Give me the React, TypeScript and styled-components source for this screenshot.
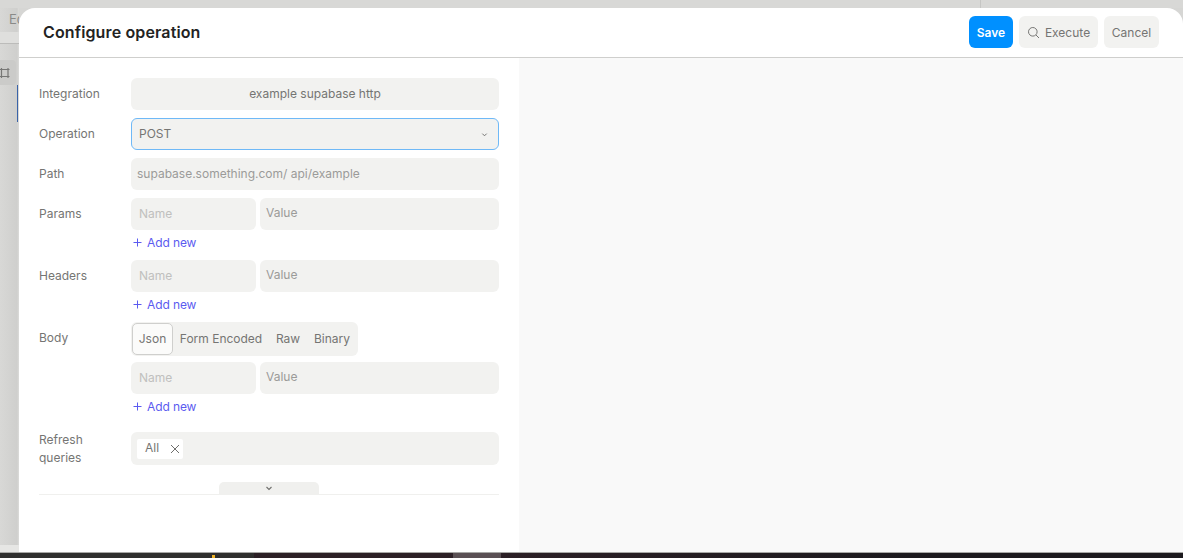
import React from "react";
import styled, { createGlobalStyle } from "styled-components";

const Global = createGlobalStyle`
  html, body { margin: 0; padding: 0; height: 100%; overflow: hidden; }
  body { font-family: Inter, "Liberation Sans", sans-serif; background: #d6d6d4; }
  #root { height: 100%; }
  * { box-sizing: border-box; }
`;

const Page = styled.div`
  width: 1183px;
  height: 558px;
  display: flex;
  flex-direction: column;
  overflow: hidden;
`;
const TopStrip = styled.div`
  height: 8px;
  flex: none;
  background: #d8d8d6;
`;
const StripPane = styled.div`
  width: 981px;
  height: 100%;
  border-right: 1px solid #c6c6c4;
`;
const Middle = styled.div`
  flex: 1;
  display: flex;
  min-height: 0;
`;
const Gutter = styled.aside`
  width: 19px;
  flex: none;
  display: flex;
  flex-direction: column;
  background: linear-gradient(to right, #d8d8d6, #cfcfcd 90%, #dcdcda);
  overflow: hidden;
`;
const GutterTitle = styled.div`
  height: 24px;
  flex: none;
  padding: 3px 0 0 9px;
  font-size: 13px;
  line-height: 16px;
  white-space: nowrap;
  color: #8a8a88;
`;
const GutterBand = styled.div`
  height: 12px;
  flex: none;
  background: #dfdfdd;
  border-bottom: 1px solid #bcbcba;
  margin-bottom: 16px;
`;
const GutterIconSlot = styled.div`
  width: 16px;
  height: 25px;
  flex: none;
  background: #cbcbc9;
  border-radius: 0 4px 4px 0;
  display: flex;
  align-items: center;
`;
const GutterLine = styled.div`
  width: 1px;
  height: 37px;
  flex: none;
  margin-left: 17px;
  background: #3a63a8;
`;
const GutterFill = styled.div`
  flex: 1;
`;
const GutterFoot = styled.div`
  height: 7px;
  flex: none;
  background: #e6e6e4;
`;
const Modal = styled.section`
  flex: 1;
  background: #fff;
  border-radius: 16px 16px 0 0;
  display: flex;
  flex-direction: column;
  min-width: 0;
`;
const Header = styled.header`
  height: 50px;
  flex: none;
  border-bottom: 1px solid #cfcfcd;
  display: flex;
  align-items: center;
  justify-content: space-between;
  padding: 0 24px;
`;
const Title = styled.h1`
  margin: 0 0 2px;
  font-size: 16px;
  letter-spacing: 0.13px;
  font-weight: 600;
  color: #232323;
`;
const Actions = styled.div`
  display: flex;
  gap: 6px;
  margin-bottom: 1px;
`;
const Button = styled.button<{ $primary?: boolean; $w: number }>`
  height: 32px;
  width: ${(p) => p.$w}px;
  border: none;
  border-radius: 6px;
  padding: 0;
  display: flex;
  align-items: center;
  justify-content: center;
  gap: 5px;
  font-family: inherit;
  font-size: 12px;
  font-weight: ${(p) => (p.$primary ? 600 : 400)};
  background: ${(p) => (p.$primary ? "#0090ff" : "#f2f2f0")};
  color: ${(p) => (p.$primary ? "#fff" : "#757573")};
`;
const Body = styled.div`
  flex: 1;
  display: flex;
  min-height: 0;
`;
const Form = styled.div`
  width: 500px;
  flex: none;
  padding: 20px 20px 0;
  display: flex;
  flex-direction: column;
`;
const Preview = styled.div`
  flex: 1;
  background: #f9f9f9;
`;
const Row = styled.div<{ $mb?: number }>`
  display: grid;
  grid-template-columns: 92px 368px;
  margin-bottom: ${(p) => p.$mb ?? 8}px;
`;
const Label = styled.label<{ $raised?: boolean }>`
  font-size: 12px;
  line-height: 18px;
  margin-top: ${(p) => (p.$raised ? -1 : 0)}px;
  padding: ${(p) => (p.$raised ? 0 : 7)}px 20px 0 0;
  color: #757573;
`;
const Field = styled.div<{ $center?: boolean; $focus?: boolean; $pad?: number }>`
  height: 32px;
  border-radius: 6px;
  background: #f2f2f0;
  display: flex;
  align-items: center;
  justify-content: ${(p) => (p.$center ? "center" : "space-between")};
  padding: 0 ${(p) => p.$pad ?? 8}px 2px;
  font-size: 12px;
  color: #757573;
  border: ${(p) => (p.$focus ? "1px solid #6fb9f7" : "none")};
`;
const Muted = styled.span`
  color: #9b9b99;
`;
const SelectArrow = styled.span`
  display: flex;
  margin: 2px 3px 0 0;
`;
const Stack = styled.div`
  display: flex;
  flex-direction: column;
`;
const Pair = styled.div`
  display: grid;
  grid-template-columns: 125px 239px;
  gap: 4px;
`;
const NameCell = styled.div`
  height: 32px;
  border-radius: 6px;
  background: #f2f2f0;
  padding: 0 8px 2px;
  display: flex;
  align-items: center;
  font-size: 12px;
  color: #c0c0be;
`;
const ValueCell = styled.div`
  height: 32px;
  border-radius: 6px;
  background: #f2f2f0;
  padding: 0 6px 4px;
  display: flex;
  align-items: center;
  font-size: 12px;
  color: #9b9b99;
`;
const AddNew = styled.button`
  border: none;
  background: none;
  padding: 0 0 0 2px;
  margin: 3px 0 1px;
  height: 18px;
  display: flex;
  align-items: center;
  gap: 5px;
  font-family: inherit;
  font-size: 12px;
  letter-spacing: -0.1px;
  color: #5b5bf0;
`;
const Tabs = styled.div`
  display: inline-flex;
  align-self: flex-start;
  align-items: center;
  height: 34px;
  background: #f2f2f0;
  border-radius: 6px;
  padding: 1px;
  margin-bottom: 6px;
`;
const Tab = styled.div<{ $active?: boolean; $w: number }>`
  width: ${(p) => p.$w}px;
  height: 32px;
  padding-bottom: 2px;
  border-radius: 5px;
  display: flex;
  align-items: center;
  justify-content: center;
  font-size: 12px;
  color: #757573;
  background: ${(p) => (p.$active ? "#fbfbfa" : "transparent")};
  border: ${(p) => (p.$active ? "1px solid #cfcfcd" : "none")};
`;
const MultiField = styled.div`
  height: 33px;
  border-radius: 6px;
  background: #f2f2f0;
  display: flex;
  align-items: center;
  padding: 0 6px;
`;
const Chip = styled.div`
  height: 20px;
  width: 46px;
  background: #fff;
  border-radius: 2px;
  display: flex;
  align-items: center;
  gap: 11px;
  padding-left: 8px;
  font-size: 12px;
  color: #757573;
`;
const ChipText = styled.span`
  margin-bottom: 2px;
`;
const Footer = styled.div`
  margin-top: 15px;
  width: 460px;
  height: 13px;
  border-bottom: 1px solid #f0f0ee;
  display: flex;
  justify-content: center;
`;
const Collapse = styled.div`
  width: 100px;
  height: 12px;
  padding-top: 2px;
  background: #f0f0ee;
  border-radius: 5px 5px 0 0;
  display: flex;
  justify-content: center;
  align-items: flex-start;
`;
const Edge = styled.div`
  height: 1px;
  flex: none;
  background: #a8a8a6;
`;
const BottomBar = styled.div`
  height: 5px;
  flex: none;
  display: flex;
`;
const BarSegment = styled.div<{ $w?: number; $c: string }>`
  ${(p) => (p.$w ? `width: ${p.$w}px; flex: none;` : "flex: 1;")}
  background: ${(p) => p.$c};
`;

const Chevron = ({ size = 8 }: { size?: number }) => (
  <svg width={size} height={size} viewBox="0 0 8 8" fill="none" stroke="#6f6f6d" strokeWidth="1.1">
    <path d="M1.5 3 L4 5.5 L6.5 3" />
  </svg>
);
const Plus = () => (
  <svg width="9" height="9" viewBox="0 0 9 9" stroke="#5b5bf0" strokeWidth="1">
    <path d="M4.5 0.5V8.5M0.5 4.5H8.5" />
  </svg>
);
const Cross = () => (
  <svg width="10" height="10" viewBox="0 0 10 10" stroke="#6f6f6d" strokeWidth="1">
    <path d="M1 1L9 9M9 1L1 9" />
  </svg>
);
const Search = () => (
  <svg width="13" height="13" viewBox="0 0 13 13" fill="none" stroke="#757573" strokeWidth="1">
    <circle cx="5.8" cy="5.8" r="4.3" />
    <path d="M9 9L12 12" />
  </svg>
);
const FrameIcon = () => (
  <svg width="10" height="12" viewBox="0 0 10 12" fill="none" stroke="#777775" strokeWidth="1.2">
    <path d="M0 2.5H9.5M0 9.5H9.5M1.5 1V11M8 1V11" />
  </svg>
);

const KeyValue = () => (
  <Pair>
    <NameCell>Name</NameCell>
    <ValueCell>Value</ValueCell>
  </Pair>
);
const Add = () => (
  <AddNew>
    <Plus />
    Add new
  </AddNew>
);

export default function App() {
  return (
    <Page>
      <Global />
      <TopStrip>
        <StripPane />
      </TopStrip>
      <Middle>
        <Gutter>
          <GutterTitle>Ed</GutterTitle>
          <GutterBand />
          <GutterIconSlot>
            <FrameIcon />
          </GutterIconSlot>
          <GutterLine />
          <GutterFill />
          <GutterFoot />
        </Gutter>
        <Modal>
          <Header>
            <Title>Configure operation</Title>
            <Actions>
              <Button $primary $w={44}>Save</Button>
              <Button $w={79}>
                <Search />
                Execute
              </Button>
              <Button $w={55}>Cancel</Button>
            </Actions>
          </Header>
          <Body>
            <Form>
              <Row>
                <Label>Integration</Label>
                <Field $center>example supabase http</Field>
              </Row>
              <Row>
                <Label>Operation</Label>
                <Field $focus $pad={7}>
                  POST
                  <SelectArrow>
                    <Chevron size={7} />
                  </SelectArrow>
                </Field>
              </Row>
              <Row>
                <Label>Path</Label>
                <Field $pad={6}>
                  <Muted>supabase.something.com/ api/example</Muted>
                </Field>
              </Row>
              <Row>
                <Label>Params</Label>
                <Stack>
                  <KeyValue />
                  <Add />
                </Stack>
              </Row>
              <Row>
                <Label>Headers</Label>
                <Stack>
                  <KeyValue />
                  <Add />
                </Stack>
              </Row>
              <Row $mb={16}>
                <Label>Body</Label>
                <Stack>
                  <Tabs>
                    <Tab $active $w={41}>Json</Tab>
                    <Tab $w={96}>Form Encoded</Tab>
                    <Tab $w={38}>Raw</Tab>
                    <Tab $w={50}>Binary</Tab>
                  </Tabs>
                  <KeyValue />
                  <Add />
                </Stack>
              </Row>
              <Row $mb={0}>
                <Label $raised>Refresh queries</Label>
                <MultiField>
                  <Chip>
                    <ChipText>All</ChipText>
                    <Cross />
                  </Chip>
                </MultiField>
              </Row>
              <Footer>
                <Collapse>
                  <Chevron />
                </Collapse>
              </Footer>
            </Form>
            <Preview />
          </Body>
        </Modal>
      </Middle>
      <Edge />
      <BottomBar>
        <BarSegment $w={212} $c="#2f2f2e" />
        <BarSegment $w={3} $c="linear-gradient(#2f2f2e 2px, #f0b429 2px)" />
        <BarSegment $w={39} $c="#2f2f2e" />
        <BarSegment $w={199} $c="#2c2026" />
        <BarSegment $w={48} $c="#5a5054" />
        <BarSegment $c="linear-gradient(to right, #2c2026, #1c1a1e 60%)" />
      </BottomBar>
    </Page>
  );
}
